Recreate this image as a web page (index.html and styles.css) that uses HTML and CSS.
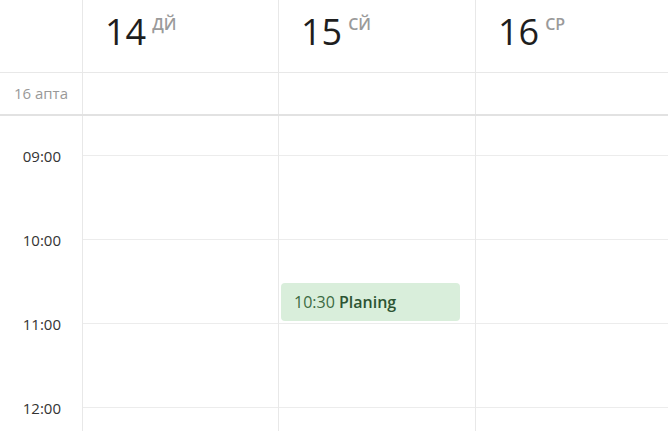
FILE: index.html
```html
<!DOCTYPE html>
<html>
    <head>
        <meta charset="utf-8">
        <title>Күнтізбе</title>
        <link rel="stylesheet" href="styles.css">
    </head>
    <body>
        <div class="cal">
            <!-- күндер -->
            <div class="row head">
                <div class="gutter"></div>
                <div class="day"><span class="num">14</span><span class="wd">ДЙ</span></div>
                <div class="day"><span class="num">15</span><span class="wd">СЙ</span></div>
                <div class="day"><span class="num">16</span><span class="wd">СР</span></div>
            </div>
            <!-- апта -->
            <div class="row allday">
                <div class="gutter week">16 апта</div>
                <div class="day"></div>
                <div class="day"></div>
                <div class="day"></div>
            </div>
            <!-- сағаттар -->
            <div class="body">
                <div class="row grid">
                    <div class="gutter times">
                        <div class="hour"></div>
                        <div class="hour"><span class="label">09:00</span></div>
                        <div class="hour"><span class="label">10:00</span></div>
                        <div class="hour"><span class="label">11:00</span></div>
                        <div class="hour"><span class="label">12:00</span></div>
                    </div>
                    <div class="day">
                        <div class="hour"></div>
                        <div class="hour"></div>
                        <div class="hour"></div>
                        <div class="hour"></div>
                        <div class="hour"></div>
                    </div>
                    <div class="day">
                        <div class="hour"></div>
                        <div class="hour"></div>
                        <div class="hour">
                            <div class="event" style="top: 43px; height: 38px;">10:30 <b>Planing</b></div>
                        </div>
                        <div class="hour"></div>
                        <div class="hour"></div>
                    </div>
                    <div class="day">
                        <div class="hour"></div>
                        <div class="hour"></div>
                        <div class="hour"></div>
                        <div class="hour"></div>
                        <div class="hour"></div>
                    </div>
                </div>
            </div>
        </div>
    </body>
</html>
```

FILE: styles.css
```css
body {
    margin: 0;
    background: #fff;
    font-family: "Open Sans", "Noto Sans", sans-serif;
    color: #222;
}
.cal {
    width: 668px;
    height: 431px;
    display: flex;
    flex-direction: column;
    overflow: hidden;
}
.row {
    display: grid;
    grid-template-columns: 83px 196px 197px 1fr;
}
.gutter, .day {
    border-right: 1px solid #e8e8e8;
}
.day:last-child {
    border-right: none;
}
.head {
    height: 72px;
    border-bottom: 1px solid #e8e8e8;
}
.head .day {
    padding: 8px 0 0 22px;
    display: flex;
    align-items: flex-start;
}
.num {
    font-size: 36px;
    line-height: 48px;
    color: #1e1e1e;
}
.wd {
    font-size: 16px;
    font-weight: 600;
    color: #9a9a9a;
    margin: 7px 0 0 6px;
    line-height: 18px;
}
.allday {
    height: 41px;
    border-bottom: 2px solid #e2e2e2;
}
.week {
    font-size: 15px;
    color: #999;
    text-align: right;
    padding-right: 14px;
    line-height: 41px;
}
.body {
    flex: 1;
    overflow: hidden;
}
.grid {
    margin-top: -45px;
}
.hour {
    position: relative;
    height: 83px;
    border-top: 1px solid #ececec;
}
.times .hour {
    border-top-color: transparent;
}
.label {
    position: absolute;
    right: 21px;
    top: 0;
    transform: translateY(-50%);
    font-size: 15px;
    color: #333;
}
.event {
    position: absolute;
    left: 2px;
    right: 15px;
    box-sizing: border-box;
    background: #d9eedb;
    border-radius: 4px;
    padding: 0 13px;
    font-size: 16px;
    line-height: 38px;
    color: #3c6a42;
}
.event b {
    font-weight: 600;
    color: #2d5433;
}
```
